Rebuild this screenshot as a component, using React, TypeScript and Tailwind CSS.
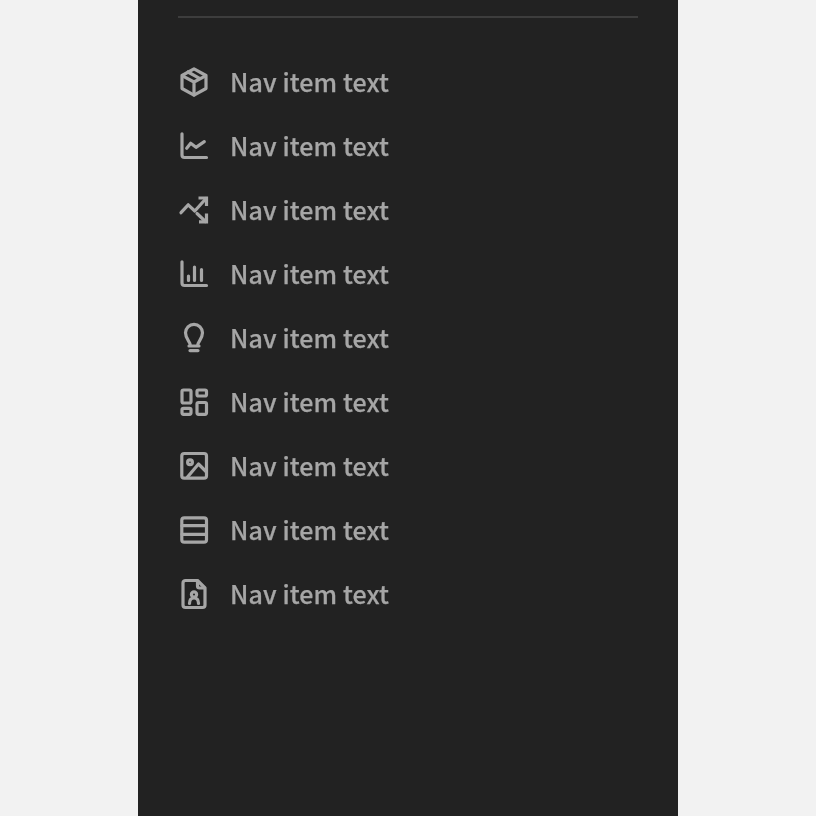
import React from 'react';

const icons: React.ReactNode[] = [
  // package
  <>
    <path d="M16 2.8 28 9.5V22.5L16 29.2 4 22.5V9.5Z" />
    <path d="M4.5 9.8 16 16 27.5 9.8M16 16V29M10 6 22 12.6" />
  </>,
  // chart line
  <>
    <path d="M4 3.8V25A2.5 2.5 0 0 0 6.5 27.5H28.5" />
    <path d="M8.7 18.3 12.7 13.3 18 17.3 26.3 11.7" />
  </>,
  // trending
  <>
    <path d="M3 18.7 10.2 10.8 16.8 17 28 4.5" />
    <path d="M20.5 4H28.5V12" strokeLinecap="butt" strokeLinejoin="miter" />
    <path d="M19 19.5 27.5 27.5" />
    <path d="M28.5 19.5V27.8H21" strokeLinecap="butt" strokeLinejoin="miter" />
  </>,
  // bars
  <>
    <path d="M4 3.8V25A2.5 2.5 0 0 0 6.5 27.5H28.5" />
    <path d="M10.5 18V22.5M16.5 9V22.5M23.5 11.5V22.5" />
  </>,
  // bulb
  <>
    <path d="M12.2 23C12.2 19.3 7.5 17 7.5 10.8A8.5 8.5 0 0 1 24.5 10.8C24.5 17 19.8 19.3 19.8 23" />
    <path d="M11 24H21M12 28.6H20" />
  </>,
  // dashboard
  <>
    <rect x="4" y="4" width="9" height="13" rx="1.5" />
    <rect x="19" y="4" width="9.5" height="6" rx="1.5" />
    <rect x="4" y="22.3" width="9" height="6" rx="1.5" />
    <rect x="19" y="16.5" width="9.5" height="11.8" rx="1.5" />
  </>,
  // image
  <>
    <rect x="3.8" y="3.5" width="24.7" height="24.7" rx="2.5" />
    <circle cx="12" cy="12.3" r="2.4" />
    <path d="M9.5 27 20.5 14 28 21.5" />
  </>,
  // table
  <>
    <rect x="3.8" y="3.8" width="24.7" height="24.4" rx="2.5" />
    <path d="M4 11.7H28M4 20.3H28" />
  </>,
  // file person
  <>
    <path d="M19.5 2.5H7.5A2.5 2.5 0 0 0 5 5V27A2.5 2.5 0 0 0 7.5 29.5H24.5A2.5 2.5 0 0 0 27 27V10Z" />
    <path d="M19.5 3V8A2 2 0 0 0 21.5 10H26.5" />
    <circle cx="16" cy="16.5" r="2.6" />
    <path d="M11.5 25.5C11.5 22 13 20 16 20S20.5 22 20.5 25.5" />
  </>,
];

const App: React.FC = () => {
  return (
    <div className="h-[816px] bg-[#f2f2f2] px-[138px] overflow-hidden">
      <div className="h-full w-[540px] bg-[#222222] px-10 pt-4 font-['Noto_Sans_CJK_SC',sans-serif] antialiased">
        <div className="h-0.5 bg-[#3d3d3d]" />
        <nav className="mt-[32px] flex flex-col">
          {icons.map((icon, i) => (
            <a key={i} href="#" className="flex h-16 items-center gap-5 text-[#a6a6a6]">
              <svg
                viewBox="0 0 32 32"
                fill="none"
                stroke="currentColor"
                strokeWidth="3.2"
                strokeLinecap="round"
                strokeLinejoin="round"
                className="h-8 w-8 shrink-0"
              >
                {icon}
              </svg>
              <span className="pb-0.5 text-[25px] font-medium leading-8 tracking-[0.1px] [will-change:transform] [-webkit-text-stroke:0.25px_#a6a6a6]">
                Nav item text
              </span>
            </a>
          ))}
        </nav>
      </div>
    </div>
  );
};

export default App;
